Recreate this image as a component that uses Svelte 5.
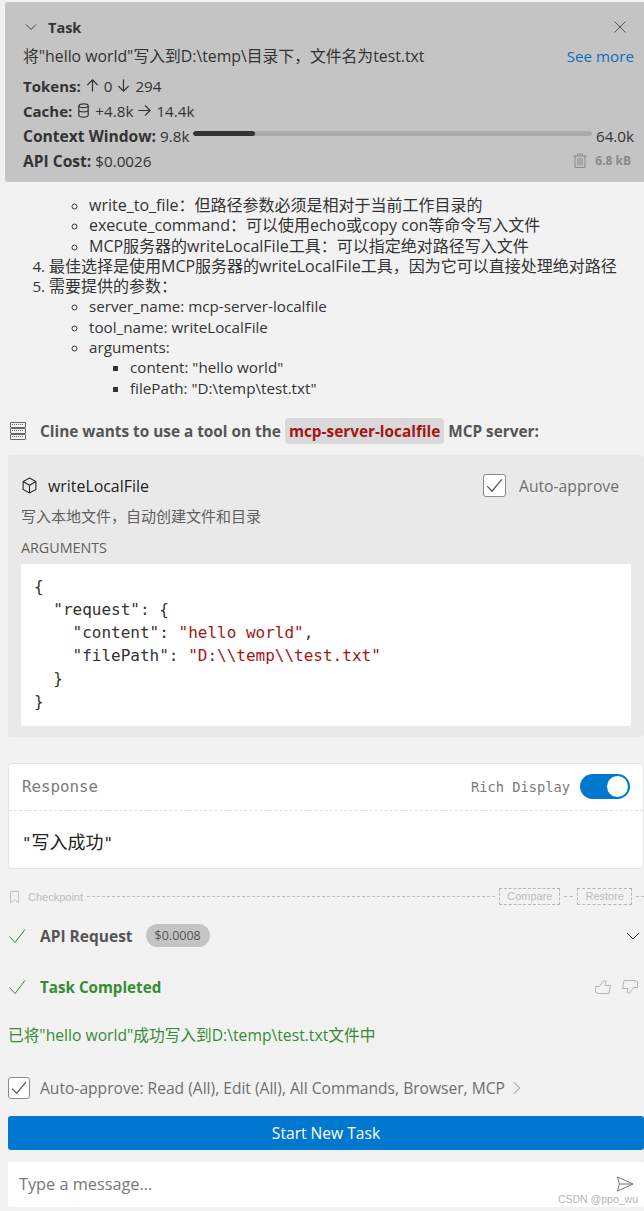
<script>
	const stats = { tokensIn: 0, tokensOut: 294, cacheWrite: '+4.8k', cacheRead: '14.4k', used: '9.8k', limit: '64.0k', cost: '$0.0026', size: '6.8 kB' };
	const usedPct = 15.4;

	const argLines = [
		{ text: '{' },
		{ text: '  "request": {' },
		{ text: '    "content": ', value: '"hello world"', tail: ',' },
		{ text: '    "filePath": ', value: '"D:\\\\temp\\\\test.txt"' },
		{ text: '  }' },
		{ text: '}' }
	];
</script>

<div class="page">
	<section class="task">
		<div class="task-head">
			<svg class="chev" viewBox="0 0 16 16" width="16" height="16"><path d="M3 5.500l5 5 5-5" /></svg>
			<strong>Task</strong>
			<svg class="close" viewBox="0 0 16 16" width="16" height="16"><path d="M2.500 2.500l11 11M13.500 2.500l-11 11" /></svg>
		</div>
		<div class="task-desc">
			<span class="desc-text">将"hello world"写入到D:\temp\目录下，文件名为test.txt</span>
			<a href="#more">See more</a>
		</div>
		<div class="stat-row">
			<b>Tokens:</b>
			<svg class="arrow" viewBox="0 0 16 16" width="15" height="15"><path d="M8 14.500V2M2.500 7.500L8 2l5.500 5.500" /></svg>
			<span>{stats.tokensIn}</span>
			<svg class="arrow" viewBox="0 0 16 16" width="15" height="15"><path d="M8 1.500V14M2.500 8.500L8 14l5.500-5.500" /></svg>
			<span>{stats.tokensOut}</span>
		</div>
		<div class="stat-row">
			<b>Cache:</b>
			<svg class="arrow" viewBox="0 0 16 16" width="15" height="15"><ellipse cx="8" cy="3" rx="5" ry="2" /><path d="M3 3v10c0 1.100 2.200 2 5 2s5-.9 5-2V3M3 7.500c0 1.100 2.200 2 5 2s5-.9 5-2" /></svg>
			<span>{stats.cacheWrite}</span>
			<svg class="arrow" viewBox="0 0 16 16" width="15" height="15"><path d="M1.500 8H14M8.500 2.500L14 8l-5.500 5.500" /></svg>
			<span>{stats.cacheRead}</span>
		</div>
		<div class="stat-row wide">
			<b>Context Window:</b>
			<span>{stats.used}</span>
			<div class="bar"><div class="bar-fill" style={`width:${usedPct}%`}></div></div>
			<span>{stats.limit}</span>
		</div>
		<div class="stat-row wide">
			<b>API Cost:</b>
			<span>{stats.cost}</span>
			<div class="size">
				<svg viewBox="0 0 16 16" width="16" height="17"><path d="M1.500 3.500h13M5.500 3.500V1.500h5v2M3 3.500V15h10V3.500M6 5.500v7.500M8 5.500v7.500M10 5.500v7.500" /></svg>
				<b>{stats.size}</b>
			</div>
		</div>
	</section>

	<div class="reasoning">
		<ul class="sub">
			<li><span class="zh">write_to_file：但路径参数必须是相对于当前工作目录的</span></li>
			<li><span class="zh">execute_command：可以使用echo或copy con等命令写入文件</span></li>
			<li><span class="zh">MCP服务器的writeLocalFile工具：可以指定绝对路径写入文件</span></li>
		</ul>
		<ol start="4">
			<li><span class="zh">最佳选择是使用MCP服务器的writeLocalFile工具，因为它可以直接处理绝对路径</span></li>
			<li><span class="zh">需要提供的参数：</span>
				<ul class="sub">
					<li>server_name: mcp-server-localfile</li>
					<li>tool_name: writeLocalFile</li>
					<li>arguments:
						<ul class="squares">
							<li>content: "hello world"</li>
							<li>filePath: "D:\temp\test.txt"</li>
						</ul>
					</li>
				</ul>
			</li>
		</ol>
	</div>

	<div class="mcp-head">
		<svg viewBox="0 0 16 18" width="16" height="18">
			<rect x="0.500" y="0.500" width="15" height="5" rx="0.500" />
			<rect x="0.500" y="6.500" width="15" height="5" rx="0.500" />
			<rect x="0.500" y="12.500" width="15" height="5" rx="0.500" />
			<path class="ticks" d="M2 2.500h12M2 8.500h12M2 14.500h12" />
		</svg>
		<span>Cline wants to use a tool on the <code class="server">mcp-server-localfile</code> MCP server:</span>
	</div>

	<section class="tool">
		<div class="tool-head">
			<svg viewBox="0 0 16 16" width="17" height="17"><path d="M8 1l6 3.300v7.400L8 15l-6-3.300V4.300zM2 4.300L8 7.800l6-3.500M8 7.800V15" /></svg>
			<span class="tool-name">writeLocalFile</span>
			<label class="approve">
				<span class="check"><svg viewBox="0 0 16 16" width="21" height="21"><path d="M2.500 8.500l3.600 3.800 7.400-9" /></svg></span>
				Auto-approve
			</label>
		</div>
		<p class="tool-desc">写入本地文件，自动创建文件和目录</p>
		<div class="args-label">ARGUMENTS</div>
		<div class="args">
			{#each argLines as line}
				<div class="arg-line">{line.text}{#if line.value}<i>{line.value}</i>{/if}{line.tail ?? ''}</div>
			{/each}
		</div>
	</section>

	<section class="response">
		<div class="response-head">
			<span class="response-title">Response</span>
			<span class="rich">Rich Display</span>
			<span class="toggle"><span></span></span>
		</div>
		<div class="response-body">"<span class="cjk">写入成功</span>"</div>
	</section>

	<div class="checkpoint">
		<svg viewBox="0 0 12 16" width="11" height="14"><path d="M1.500 1.500h9v13L6 11l-4.500 3.500z" /></svg>
		<span class="cp-label">Checkpoint</span>
		<span class="dots"></span>
		<span class="cp-btn">Compare</span>
		<span class="dots short"></span>
		<span class="cp-btn">Restore</span>
		<span class="dots end"></span>
	</div>

	<div class="row api">
		<svg class="ok" viewBox="0 0 17 16" width="17" height="16"><path d="M.5 8.500L6 14.500 16 1.500" /></svg>
		<b>API Request</b>
		<span class="price">$0.0008</span>
		<svg class="down" viewBox="0 0 16 16" width="16" height="16"><path d="M2 5l6 6 6-6" /></svg>
	</div>

	<div class="row done">
		<svg class="ok" viewBox="0 0 17 16" width="17" height="16"><path d="M.5 8.500L6 14.500 16 1.500" /></svg>
		<b>Task Completed</b>
		<span class="thumbs">
			<svg viewBox="0 0 16 16" width="16" height="16"><path d="M.5 7.500h4l4-6 2.500 1-1 4h5.500l-1.500 8H4l-3.500-1z" /></svg>
			<svg viewBox="0 0 16 16" width="16" height="16"><path d="M15.500 8.500h-4l-4 6-2.500-1 1-4H.5L2 1.500h10l3.500 1z" /></svg>
		</span>
	</div>

	<p class="result">已将"hello world"成功写入到D:\temp\test.txt文件中</p>

	<div class="auto">
		<span class="check"><svg viewBox="0 0 16 16" width="20" height="20"><path d="M2.500 8.500l3.600 3.800 7.400-9" /></svg></span>
		<span class="auto-text">Auto-approve: Read (All), Edit (All), All Commands, Browser, MCP</span>
		<svg class="more" viewBox="0 0 16 16" width="14" height="14"><path d="M4.500 1.500L11 8l-6.500 6.500" /></svg>
	</div>

	<button class="start">Start New Task</button>

	<div class="input">
		<span>Type a message...</span>
		<svg viewBox="0 0 18 16" width="18" height="16"><path d="M1.500 1L17 8 1.500 15 3.500 8zM3.500 8H17" /></svg>
		<em>CSDN @ppo_wu</em>
	</div>
</div>

<style>
	:global(body) {
		margin: 0;
		background: #f2f2f2;
	}

	.page {
		width: 644px;
		height: 1211px;
		overflow: hidden;
		padding-top: 2px;
		box-sizing: border-box;
		font-family: "Open Sans", "Noto Sans CJK SC", sans-serif;
		font-size: 15.200px;
		color: #333;
	}

	svg {
		fill: none;
		stroke: currentColor;
		stroke-width: 1;
		flex: none;
	}

	.task {
		margin-left: 5px;
		height: 180px;
		box-sizing: border-box;
		background: #c4c4c4;
		border-radius: 3px 0 0 3px;
		padding: 13px 10px 0 18px;
	}

	.task-head {
		display: flex;
		align-items: center;
		height: 24px;
	}

	.task-head strong {
		margin-left: 9px;
		font-size: 14.500px;
	}

	.chev {
		color: #444;
	}

	.close {
		margin-left: auto;
		margin-right: 6px;
		color: #555;
	}

	.task-desc {
		display: flex;
		justify-content: space-between;
		line-height: 20px;
		margin-top: 7px;
	}

	.desc-text {
		font-size: 15.800px;
	}

	.task-desc a {
		color: #0f6cbd;
		text-decoration: none;
	}

	.stat-row {
		display: flex;
		align-items: center;
		gap: 4px;
		height: 25px;
	}

	.stat-row b {
		font-size: 15px;
	}

	.stat-row.wide b {
		font-size: 15.600px;
	}

	.stat-row.wide .size b {
		font-size: 12px;
	}

	.task-desc + .stat-row {
		margin-top: 7px;
	}

	.arrow {
		stroke-width: 1.300;
		color: #333;
	}

	.bar {
		flex: 1;
		height: 5px;
		background: #aaa;
		border-radius: 3px;
		overflow: hidden;
		margin: 0 0 4px 0;
	}

	.bar-fill {
		height: 100%;
		background: #333;
		border-radius: 3px;
	}

	.size {
		display: flex;
		align-items: center;
		gap: 7px;
		margin-left: auto;
		margin-right: 3px;
		color: #8a8a8a;
	}

	.reasoning {
		margin-top: 13px;
		line-height: 20.300px;
		color: #333;
	}

	.reasoning ul,
	.reasoning ol {
		margin: 0;
	}

	.reasoning > .sub {
		padding-left: 89px;
	}

	.reasoning ol {
		padding-left: 49px;
	}

	.reasoning ol .sub {
		padding-left: 40px;
	}

	.zh {
		font-size: 16px;
	}

	.sub {
		list-style: circle;
	}

	.squares {
		list-style: square;
		padding-left: 41px;
	}

	.mcp-head {
		display: flex;
		align-items: center;
		gap: 14px;
		margin: 20px 0 0 10px;
		height: 26px;
		font-size: 15.350px;
		font-weight: 700;
		color: #555;
	}

	.mcp-head svg {
		color: #666;
	}

	.ticks {
		stroke-dasharray: 1 1;
	}

	.server {
		font-family: inherit;
		color: #a31515;
		background: #d9d9d9;
		border-radius: 4px;
		padding: 3px 4px;
	}

	.tool {
		margin: 11px 0 0 8px;
		height: 282px;
		box-sizing: border-box;
		background: #e9e9e9;
		border-radius: 4px;
		padding: 16px 13px 0;
	}

	.tool-head {
		display: flex;
		align-items: center;
		height: 30px;
		color: #222;
	}

	.tool-name {
		margin-left: 10px;
		font-size: 15.900px;
	}

	.approve {
		margin-left: auto;
		display: flex;
		align-items: center;
		gap: 13px;
		margin-right: 12px;
		color: #6f6f6f;
		font-size: 15.700px;
	}

	.check {
		width: 23px;
		height: 23px;
		box-sizing: border-box;
		border: 1px solid #8a8a8a;
		border-radius: 3px;
		background: #fff;
		display: flex;
		align-items: center;
		justify-content: center;
		color: #555;
	}

	.tool-desc {
		margin: 5px 0 0;
		line-height: 20px;
		color: #5f5f5f;
		font-size: 15px;
	}

	.args-label {
		margin-top: 12px;
		line-height: 20px;
		color: #5f5f5f;
		font-size: 14.300px;
	}

	.args {
		margin-top: 6px;
		height: 162px;
		box-sizing: border-box;
		background: #fff;
		border-radius: 2px;
		padding: 11px 13px;
		font-family: "DejaVu Sans Mono", monospace;
		font-size: 16px;
		line-height: 23px;
		color: #333;
	}

	.arg-line {
		white-space: pre;
	}

	.args i {
		font-style: normal;
		color: #a31515;
	}

	.response {
		margin: 26px 0 0 8px;
		height: 106px;
		box-sizing: border-box;
		background: #fff;
		border: 1px solid #e5e5e5;
		border-radius: 4px;
	}

	.response-head {
		display: flex;
		align-items: center;
		height: 47px;
		box-sizing: border-box;
		padding: 0 13px;
		border-bottom: 1px dashed #e0e0e0;
		font-family: "DejaVu Sans Mono", monospace;
		color: #7a7a7a;
	}

	.response-title {
		font-size: 15.800px;
	}

	.rich {
		margin-left: auto;
		font-size: 13.700px;
	}

	.toggle {
		margin-left: 10px;
		width: 50px;
		height: 25px;
		border-radius: 13px;
		background: #0078d0;
		display: flex;
		align-items: center;
		justify-content: flex-end;
		padding-right: 2px;
		box-sizing: border-box;
	}

	.toggle span {
		width: 21px;
		height: 21px;
		border-radius: 50%;
		background: #fff;
	}

	.response-body {
		padding: 20px 13px;
		font-family: "DejaVu Sans Mono", "Noto Sans CJK SC", monospace;
		font-size: 15.800px;
		line-height: 24px;
		color: #222;
	}

	.cjk {
		font-size: 18px;
	}

	.checkpoint {
		display: flex;
		align-items: center;
		gap: 4px;
		margin: 19px 0 0 9px;
		height: 18px;
		color: #bcbcbc;
		font-size: 11px;
		font-family: "Liberation Sans", sans-serif;
	}

	.cp-label {
		margin-left: 4px;
	}

	.dots {
		flex: 1;
		border-top: 1px dashed #bbb;
	}

	.dots.short {
		flex: none;
		width: 9px;
	}

	.dots.end {
		flex: none;
		width: 8px;
	}

	.cp-btn {
		border: 1px dashed #b5b5b5;
		padding: 0 7px;
		line-height: 15px;
	}

	.row {
		display: flex;
		align-items: center;
		margin-left: 9px;
		height: 30px;
	}

	.row b {
		margin-left: 14px;
	}

	.ok {
		color: #388a34;
	}

	.api {
		margin-top: 15px;
		color: #555;
	}

	.api b {
		font-size: 15.500px;
	}

	.price {
		margin-left: 13px;
		background: #c4c4c4;
		color: #555;
		border-radius: 12px;
		height: 23px;
		line-height: 23px;
		padding: 0 9px;
		font-size: 12.500px;
	}

	.down {
		margin-left: auto;
		margin-right: 3px;
		color: #333;
	}

	.done {
		margin-top: 21px;
		color: #388a34;
	}

	.thumbs {
		margin-left: auto;
		display: flex;
		gap: 11px;
		margin-right: 6px;
		color: #b5b5b5;
	}

	.result {
		margin: 23px 0 0 8px;
		line-height: 20px;
		color: #388a34;
		font-size: 15.700px;
	}

	.auto {
		display: flex;
		align-items: center;
		margin: 31px 0 0 8px;
		height: 24px;
		color: #6f6f6f;
	}

	.auto .check {
		width: 22px;
		height: 22px;
	}

	.auto-text {
		margin-left: 10px;
		font-size: 15.600px;
	}

	.more {
		margin-left: 5px;
	}

	.start {
		display: block;
		margin: 16px 0 0 8px;
		width: 636px;
		height: 34px;
		border: 0;
		border-radius: 3px;
		background: #0078d0;
		color: #fff;
		font: inherit;
		font-size: 15.600px;
	}

	.input {
		position: relative;
		margin: 12px 0 0 8px;
		height: 45px;
		background: #fff;
		border-radius: 3px;
		display: flex;
		align-items: center;
		padding: 0 10px 0 11px;
		color: #777;
		font-size: 16.300px;
	}

	.input svg {
		margin-left: auto;
		color: #777;
	}

	.input em {
		position: absolute;
		right: 6px;
		bottom: 2px;
		font-style: normal;
		font-family: "Liberation Sans", sans-serif;
		font-size: 10.500px;
		color: #b5b5b5;
	}
</style>
